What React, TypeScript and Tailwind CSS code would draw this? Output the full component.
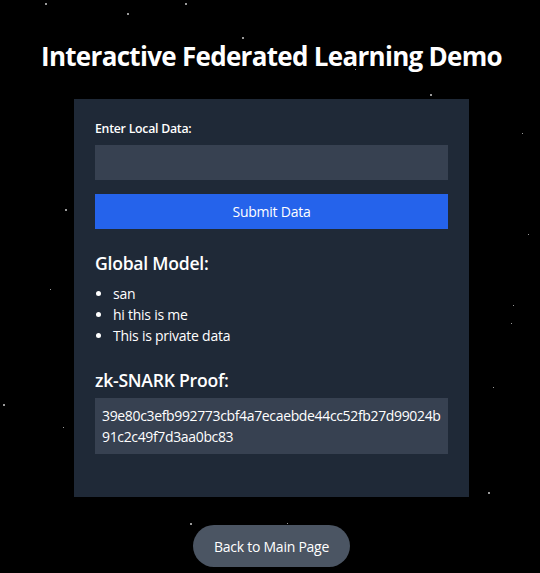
const stars = [
  { x: 45, y: 3, s: 2 },
  { x: 127, y: 13, s: 2 },
  { x: 185, y: 3, s: 2 },
  { x: 242, y: 37, s: 2 },
  { x: 355, y: 69, s: 1 },
  { x: 430, y: 94, s: 2 },
  { x: 522, y: 133, s: 1 },
  { x: 528, y: 234, s: 1 },
  { x: 65, y: 209, s: 2 },
  { x: 50, y: 289, s: 1 },
  { x: 3, y: 404, s: 2 },
  { x: 63, y: 427, s: 1 },
  { x: 190, y: 523, s: 2 },
  { x: 287, y: 523, s: 1 },
  { x: 513, y: 305, s: 1 },
  { x: 511, y: 323, s: 1 },
  { x: 493, y: 387, s: 1 },
  { x: 488, y: 492, s: 2 },
]

const modelItems = ['san', 'hi this is me', 'This is private data']

export default function App() {
  return (
    <div
      className="relative min-h-screen bg-black text-white overflow-hidden tracking-[-0.25px]"
      style={{ fontFamily: '"Open Sans", "Noto Sans", sans-serif' }}
    >
      {stars.map((st, i) => (
        <span
          key={i}
          className="absolute rounded-full bg-white opacity-80"
          style={{ left: st.x, top: st.y, width: st.s, height: st.s }}
        />
      ))}

      <div className="relative flex flex-col items-center pt-[40px] pl-[3px]">
        <h1 className="text-[26px] leading-[32px] font-bold tracking-[-0.7px] mb-[27px]">
          Interactive Federated Learning Demo
        </h1>

        <div className="w-[395px] bg-[#1f2937] px-[21px] pt-[21px] pb-[43px]">
          <label className="block text-[12.3px] leading-[17.6px] font-semibold mb-[7px]">
            Enter Local Data:
          </label>
          <input type="text" className="block w-full h-[35.5px] bg-[#374151] outline-none px-[7px] text-[14px]" />
          <button className="block w-full h-[35px] mt-[14px] bg-[#2563eb] text-[14px] text-white">
            Submit Data
          </button>

          <h2 className="mt-[22px] text-[17.6px] leading-[24.6px] font-semibold mb-[7px]">Global Model:</h2>
          <ul className="list-disc pl-[18px] text-[14px] leading-[21px]">
            {modelItems.map((item) => (
              <li key={item}>{item}</li>
            ))}
          </ul>

          <h2 className="mt-[22px] text-[17.6px] leading-[24.6px] font-semibold mb-[6px]">zk-SNARK Proof:</h2>
          <div className="bg-[#374151] p-[7px] text-[14px] leading-[21px] tracking-[-0.35px] break-all">
            39e80c3efb992773cbf4a7ecaebde44cc52fb27d99024b91c2c49f7d3aa0bc83
          </div>
        </div>

        <button className="mt-[28px] h-[42px] px-[21px] rounded-full bg-[#4b5563] text-[14px] text-white">
          Back to Main Page
        </button>
      </div>
    </div>
  )
}
